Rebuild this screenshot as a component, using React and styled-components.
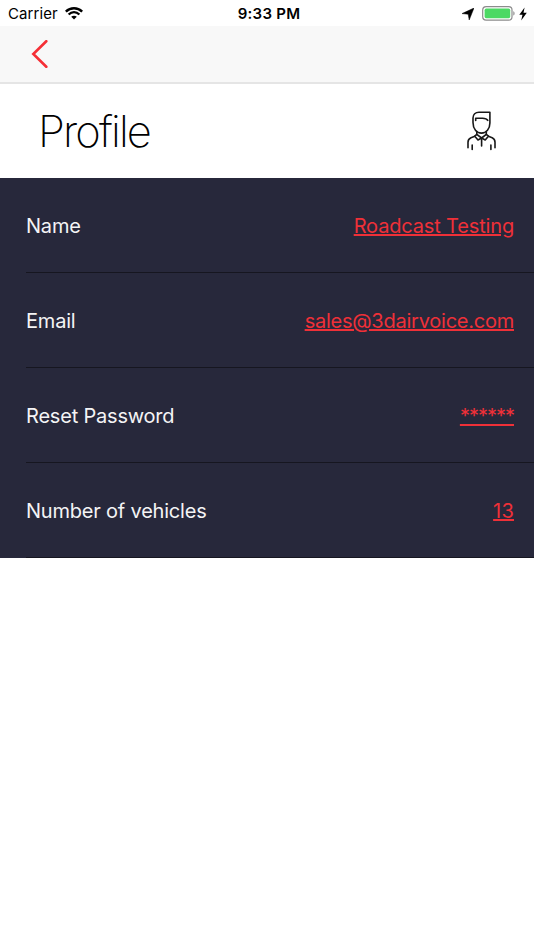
import styled, { createGlobalStyle } from "styled-components";

const GlobalStyle = createGlobalStyle`
  * {
    box-sizing: border-box;
  }

  body {
    margin: 0;
    background: #fff;
    font-family: Inter, "Liberation Sans", sans-serif;
  }
`;

const Screen = styled.div`
  min-height: 950px;
  background: #fff;
`;

const StatusBar = styled.header`
  display: grid;
  grid-template-columns: 1fr auto 1fr;
  align-items: center;
  height: 26px;
  padding: 1px 7px 0 8px;
  font-size: 15px;
  color: #000;
`;

const Carrier = styled.div`
  display: flex;
  align-items: center;
  gap: 7px;
  letter-spacing: 0.08px;
`;

const Time = styled.div`
  padding-left: 3px;
  font-weight: 600;
  letter-spacing: 0.25px;
`;

const StatusIcons = styled.div`
  display: flex;
  align-items: center;
  justify-content: flex-end;
`;

const BatteryGroup = styled.div`
  display: flex;
  align-items: center;
  gap: 3px;
  margin-left: 8px;
`;

const NavBar = styled.nav`
  display: flex;
  align-items: center;
  height: 58px;
  padding-left: 31px;
  background: #f8f8f8;
  border-bottom: 2px solid #e5e5e5;
`;

const BackButton = styled.button`
  display: flex;
  padding: 0;
  border: 0;
  background: none;
  cursor: pointer;
`;

const TitleRow = styled.section`
  display: flex;
  align-items: center;
  justify-content: space-between;
  height: 94px;
  padding: 0 38px;
`;

const Title = styled.h1`
  margin: 0;
  font-size: 43.5px;
  font-weight: 200;
  line-height: 54px;
  letter-spacing: -1.85px;
  color: #000;
`;

const List = styled.ul`
  margin: 0;
  padding: 0 0 0 26px;
  list-style: none;
  background: #27283b;
`;

const Row = styled.li`
  display: flex;
  align-items: center;
  justify-content: space-between;
  height: 95px;
  padding: 2px 20px 0 0;
  border-bottom: 1px solid #161620;
  font-size: 20px;
`;

const Label = styled.span`
  color: #f4f4f5;
  letter-spacing: -0.2px;
`;

const Value = styled.a`
  color: #ef3038;
  letter-spacing: ${(props) => props.$spacing}px;
  text-decoration: underline;
  text-decoration-thickness: 1.5px;
  text-underline-offset: 1px;
`;

const WifiIcon = () => (
  <svg width="18" height="13" viewBox="0 0 18 13" fill="none" stroke="#000">
    <path d="M0.8 4.7C5.5 0.2 12.5 0.2 17.2 4.7" strokeWidth="2.5" />
    <path d="M3.6 7.5C6.8 4.5 11.2 4.5 14.4 7.5" strokeWidth="2.3" />
    <path d="M9 12.6L6.2 9.8C7.8 8.4 10.2 8.4 11.8 9.8Z" fill="#000" stroke="none" />
  </svg>
);

const LocationIcon = () => (
  <svg width="12" height="12" viewBox="0 0 12 12">
    <path d="M12 0L7.2 12L6.2 6.2L0 5.6Z" fill="#000" stroke="#000" strokeWidth="0.5" strokeLinejoin="round" />
  </svg>
);

const BatteryIcon = () => (
  <svg width="34" height="15" viewBox="0 0 34 15">
    <rect x="0.7" y="0.7" width="29.3" height="13.4" rx="3.4" fill="#fff" stroke="#8c8c8c" strokeWidth="1.2" />
    <rect x="2.6" y="2.6" width="25.6" height="9.6" rx="1.6" fill="#4cd964" />
    <path d="M31.3 5.2C33 5.8 33 9 31.3 9.6Z" fill="#8c8c8c" />
  </svg>
);

const BoltIcon = () => (
  <svg width="8" height="14" viewBox="0 0 8 14">
    <path d="M5.6 0.5L0.3 7.7H3.5L2.2 13.5L7.8 5.8H4.5Z" fill="#000" />
  </svg>
);

const BackIcon = () => (
  <svg width="18" height="28" viewBox="0 0 18 28" fill="none">
    <path d="M15.3 1.2L2.3 14L15.3 26.8" stroke="#f52f36" strokeWidth="2.6" strokeLinecap="round" />
  </svg>
);

const PersonIcon = () => (
  <svg width="29" height="40" viewBox="0 0 29 40" fill="none" stroke="#181818" strokeWidth="1.6" strokeLinecap="round" strokeLinejoin="round">
    <path d="M6 11.5V7C6 3.3 8.4 1.2 12 1.2H22.9V12C22.9 18 19.3 22.1 14.5 22.1C9.7 22.1 6 18 6 11.5Z" />
    <path d="M8.7 9.5V7.2H15.5C18.2 7.2 20 7.9 20.8 9.4" />
    <path d="M9.8 21V23.3L14.6 27L19.3 23.3V21" />
    <path d="M9.8 23.3L7.8 25.2L11 29L14.6 27L18.2 29L21.4 25.2L19.3 23.3" />
    <path d="M7.8 25.3L4 26.7C2 27.6 1 29.2 1 31.2V36.8M21.4 25.3L25.2 26.7C27.2 27.6 28 29.2 28 31.2V36.8" />
    <path d="M14.6 27.5V35M5.2 34V38.4M23.9 34V38.4" />
  </svg>
);

const fields = [
  { label: "Name", value: "Roadcast Testing", spacing: -0.16 },
  { label: "Email", value: "sales@3dairvoice.com", spacing: -0.24 },
  { label: "Reset Password", value: "******", spacing: -1 },
  { label: "Number of vehicles", value: "13", spacing: 0.2 },
];

const App = () => (
  <>
    <GlobalStyle />
    <Screen>
      <StatusBar>
        <Carrier>
          <span>Carrier</span>
          <WifiIcon />
        </Carrier>
        <Time>9:33 PM</Time>
        <StatusIcons>
          <LocationIcon />
          <BatteryGroup>
            <BatteryIcon />
            <BoltIcon />
          </BatteryGroup>
        </StatusIcons>
      </StatusBar>
      <NavBar>
        <BackButton aria-label="Back">
          <BackIcon />
        </BackButton>
      </NavBar>
      <TitleRow>
        <Title>Profile</Title>
        <PersonIcon />
      </TitleRow>
      <List>
        {fields.map(({ label, value, spacing }) => (
          <Row key={label}>
            <Label>{label}</Label>
            <Value $spacing={spacing}>{value}</Value>
          </Row>
        ))}
      </List>
    </Screen>
  </>
);

export default App;
